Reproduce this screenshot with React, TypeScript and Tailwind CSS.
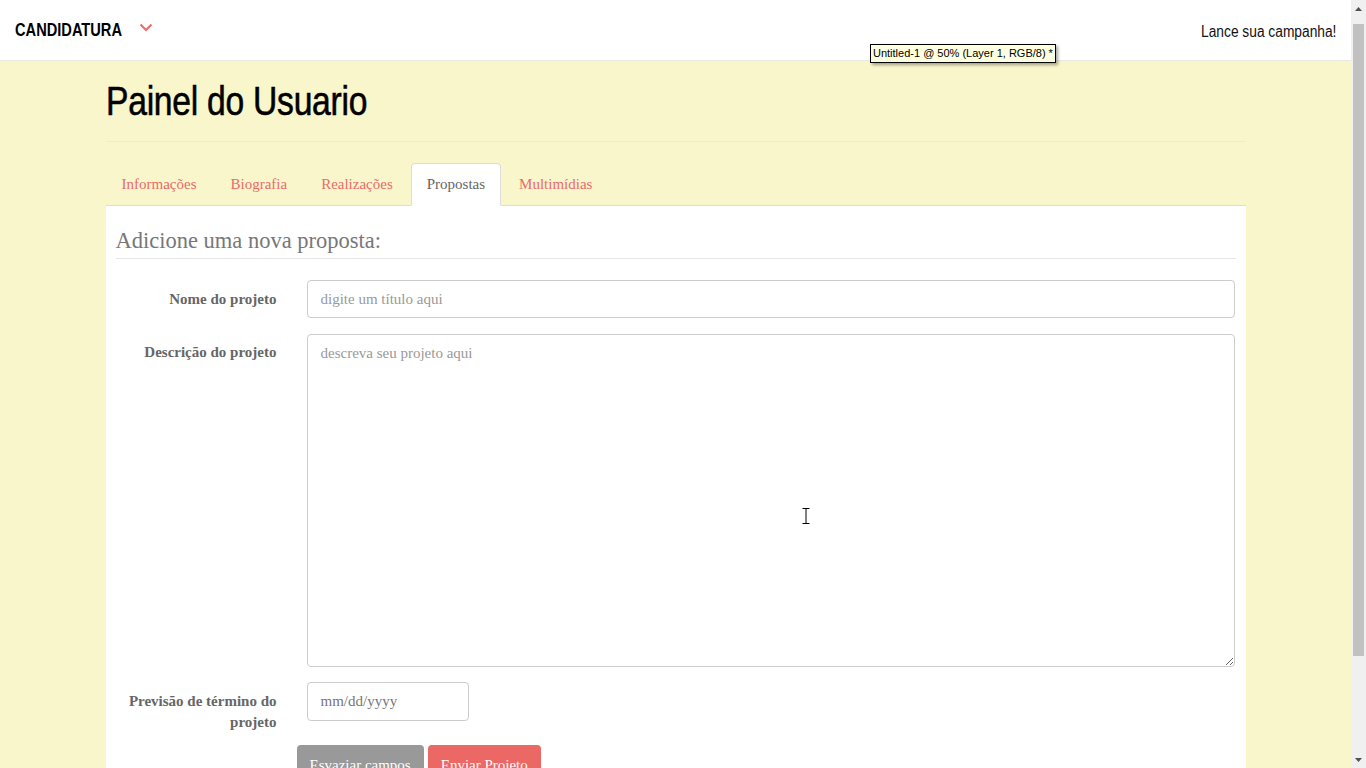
import React from "react";

const serif = "font-['Liberation_Serif','Times_New_Roman',serif]";
const sans = "font-['Liberation_Sans',Arial,sans-serif]";

function Tab({ label, active }: { label: string; active?: boolean }) {
  return (
    <li className="-mb-px mr-[2px]">
      <a
        className={
          "block h-[43px] px-[15px] pt-[10px] text-[15px] leading-[20px] rounded-t-[4px] border " +
          (active
            ? "bg-white border-[#ddd] border-b-transparent text-[#666]"
            : "border-transparent text-[#ea6a6a]")
        }
      >
        {label}
      </a>
    </li>
  );
}

export default function App() {
  return (
    <div className={"relative w-[1366px] h-[768px] overflow-hidden flex bg-[#f9f6cb] " + serif}>
      <div className="flex-1 flex flex-col min-w-0">
        <nav className="h-[61px] shrink-0 bg-white border-b border-[#e8e8e4] flex items-center justify-between px-[15px]">
          <div className="flex items-center">
            <span className="w-[110px] whitespace-nowrap">
              <span className={"inline-block origin-left scale-x-[0.77] text-[19px] font-bold text-black " + sans}>
                CANDIDATURA
              </span>
            </span>
            <svg className="ml-[14px] -mt-[6px]" width="14" height="9" viewBox="0 0 14 9">
              <path d="M1.5 1.5 L7 7 L12.5 1.5" fill="none" stroke="#ea6a6a" strokeWidth="2" />
            </svg>
          </div>
          <span className="w-[126px] flex justify-end whitespace-nowrap mt-[3px]">
            <span className={"shrink-0 inline-block origin-right scale-x-[0.86] text-[16px] text-[#111] " + sans}>
              Lance sua campanha!
            </span>
          </span>
        </nav>

        <main className="w-[1170px] mx-auto px-[15px] flex-1 flex flex-col min-h-0">
          <div className="border-b border-[#efecd2] pb-[18px]">
            <h1 className={"mt-[18px] text-[41px] leading-[44px] text-black font-normal whitespace-nowrap " + sans}>
              <span className="inline-block origin-left scale-x-[0.82] tracking-[-0.3px] [-webkit-text-stroke:0.6px_black]">
                Painel do Usuario
              </span>
            </h1>
          </div>

          <ul className="mt-[21px] flex border-b border-[#ddd]">
            <Tab label="Informações" />
            <Tab label="Biografia" />
            <Tab label="Realizações" />
            <Tab label="Propostas" active />
            <Tab label="Multimídias" />
          </ul>

          <section className="flex-1 bg-white px-[10px] pt-[22px]">
            <h3 className="text-[22.5px] leading-[26px] text-[#777] pb-[4px] border-b border-[#e5e5e5]">
              Adicione uma nova proposta:
            </h3>

            <div className="mt-[21px] pr-[1px] flex flex-col gap-[16px]">
              <div className="flex">
                <label className="w-[161px] shrink-0 text-right font-bold text-[15px] leading-[21px] text-[#666] pt-[9px]">
                  Nome do projeto
                </label>
                <input
                  className="ml-[30px] flex-1 h-[38px] border border-[#ccc] rounded-[4px] px-[13px] text-[15px] text-[#555] placeholder:text-[#999] outline-none"
                  placeholder="digite um título aqui"
                />
              </div>
              <div className="flex">
                <label className="w-[161px] shrink-0 text-right font-bold text-[15px] leading-[21px] text-[#666] pt-[8px]">
                  Descrição do projeto
                </label>
                <textarea
                  className="ml-[30px] flex-1 h-[333px] border border-[#ccc] rounded-[4px] px-[13px] py-[8px] text-[15px] leading-[21px] text-[#555] placeholder:text-[#999] outline-none resize-y"
                  placeholder="descreva seu projeto aqui"
                />
              </div>
              <div className="flex -mt-px">
                <label className="w-[161px] shrink-0 text-right font-bold text-[15px] leading-[21px] text-[#666] pt-[9px]">
                  Previsão de término do projeto
                </label>
                <div className="ml-[30px] w-[162px] h-[39px] border border-[#ccc] rounded-[4px] px-[13px] flex items-center text-[15px] text-[#777]">
                  mm/dd/yyyy
                </div>
              </div>
              <div className="flex gap-[4px] pl-[181px] -mt-[4px]">
                <button className="h-[40px] px-[13px] rounded-[4px] bg-[#999] text-white text-[15px] leading-[40px]">
                  Esvaziar campos
                </button>
                <button className="h-[40px] px-[13px] rounded-[4px] bg-[#eb6864] text-white text-[15px] leading-[40px]">
                  Enviar Projeto
                </button>
              </div>
            </div>
          </section>
        </main>
      </div>

      {/* scrollbar */}
      <div className="w-[15px] shrink-0 bg-[#f0f0f0] flex flex-col items-center">
        <div className="h-[17px] flex items-center justify-center">
          <svg width="7" height="4" viewBox="0 0 7 4"><path d="M0 4 L3.5 0 L7 4Z" fill="#505050" /></svg>
        </div>
        <div className="mt-[7px] w-[11px] h-[632px] bg-[#c1c1c1]" />
        <div className="flex-1" />
        <div className="h-[17px] flex items-center justify-center">
          <svg width="7" height="4" viewBox="0 0 7 4"><path d="M0 0 L3.5 4 L7 0Z" fill="#505050" /></svg>
        </div>
      </div>

      {/* OS tooltip */}
      <div className="absolute left-[870px] top-[44px] h-[19px] px-[2px] bg-[#ffffe1] border border-black text-[11px] leading-[17px] text-black font-['Liberation_Sans',sans-serif] shadow-[2px_2px_3px_rgba(0,0,0,0.35)] whitespace-nowrap">
        Untitled-1 @ 50% (Layer 1, RGB/8) *
      </div>

      {/* I-beam cursor */}
      <svg className="absolute left-[801px] top-[507px]" width="10" height="18" viewBox="0 0 10 18">
        <path d="M1.5 1.5 H8.5 M5 1.5 V16.5 M1.5 16.5 H8.5" fill="none" stroke="white" strokeWidth="3" />
        <path d="M1.5 1.5 H8.5 M5 1.5 V16.5 M1.5 16.5 H8.5" fill="none" stroke="black" strokeWidth="1" />
      </svg>
    </div>
  );
}
